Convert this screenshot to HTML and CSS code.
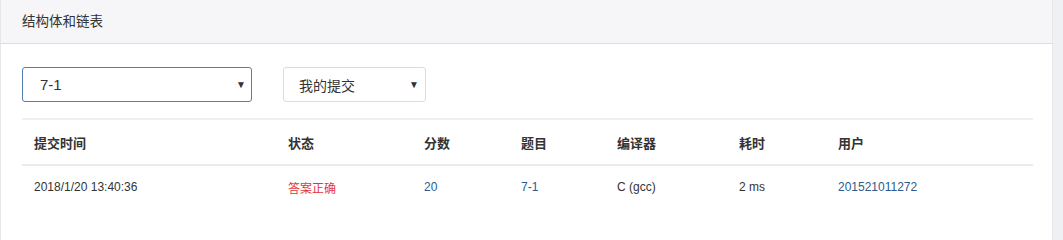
FILE: index.html
```html
<!DOCTYPE html>
<html lang="zh-CN">
<head>
<meta charset="utf-8">
<title>结构体和链表</title>
<link rel="stylesheet" href="styles.css">
</head>
<body>
<div class="card">
  <div class="card-header">结构体和链表</div>
  <div class="card-body">
    <div class="filters">
      <div class="select select-problem"><span>7-1</span><span class="caret">▼</span></div>
      <div class="select select-scope"><span>我的提交</span><span class="caret">▼</span></div>
    </div>
    <table class="subs">
      <colgroup>
        <col style="width:254px"><col style="width:136px"><col style="width:97px"><col style="width:96px"><col style="width:122px"><col style="width:99px"><col>
      </colgroup>
      <thead>
        <tr><th>提交时间</th><th>状态</th><th>分数</th><th>题目</th><th>编译器</th><th>耗时</th><th>用户</th></tr>
      </thead>
      <tbody>
        <tr>
          <td>2018/1/20 13:40:36</td>
          <td class="ok">答案正确</td>
          <td class="link">20</td>
          <td class="link">7-1</td>
          <td>C (gcc)</td>
          <td>2 ms</td>
          <td class="link">201521011272</td>
        </tr>
      </tbody>
    </table>
  </div>
</div>
</body>
</html>
```

FILE: styles.css
```css
html, body {
  margin: 0;
  padding: 0;
  height: 100%;
  overflow: hidden;
}
html {
  background: #eef0f4;
}
body {
  font-family: "Liberation Sans", "Noto Sans CJK SC", sans-serif;
  color: #333;
}
.card {
  box-sizing: border-box;
  width: 1053px;
  height: 100%;
  background: #fff;
  border-left: 1px solid #e6e6e9;
  border-right: 1px solid #e6e6e9;
}
.card-header {
  height: 43px;
  background: #f6f6f8;
  border-bottom: 1px solid #dcdde0;
  padding-left: 21px;
  font-size: 13.5px;
  line-height: 44px;
  color: #333;
}
.card-body {
  padding: 23px 19px 0 21px;
}
.filters {
  display: flex;
  gap: 31px;
}
.select {
  box-sizing: border-box;
  height: 35px;
  display: flex;
  align-items: center;
  justify-content: space-between;
  border-radius: 3px;
  background: #fff;
}
.select-problem {
  width: 230px;
  border: 1px solid #4e7fb8;
  padding: 0 5px 0 17px;
  font-size: 15px;
}
.select-scope {
  width: 143px;
  border: 1px solid #dcdcdc;
  padding: 0 6px 0 15px;
  font-size: 14px;
}
.caret {
  font-size: 10px;
  color: #333;
}
.subs {
  margin-top: 16px;
  width: 1011px;
  border-collapse: collapse;
  table-layout: fixed;
  font-size: 12px;
}
.subs th {
  text-align: left;
  font-weight: bold;
  font-size: 13px;
  height: 44px;
  padding: 0 0 0 12px;
  border-top: 2px solid #f0f0f2;
  border-bottom: 2px solid #ebebee;
}
.subs td {
  height: 38px;
  padding: 2px 0 0 12px;
  white-space: nowrap;
}
.subs .ok {
  color: #e0353f;
}
.subs .link {
  color: #2d5b8a;
}
```
